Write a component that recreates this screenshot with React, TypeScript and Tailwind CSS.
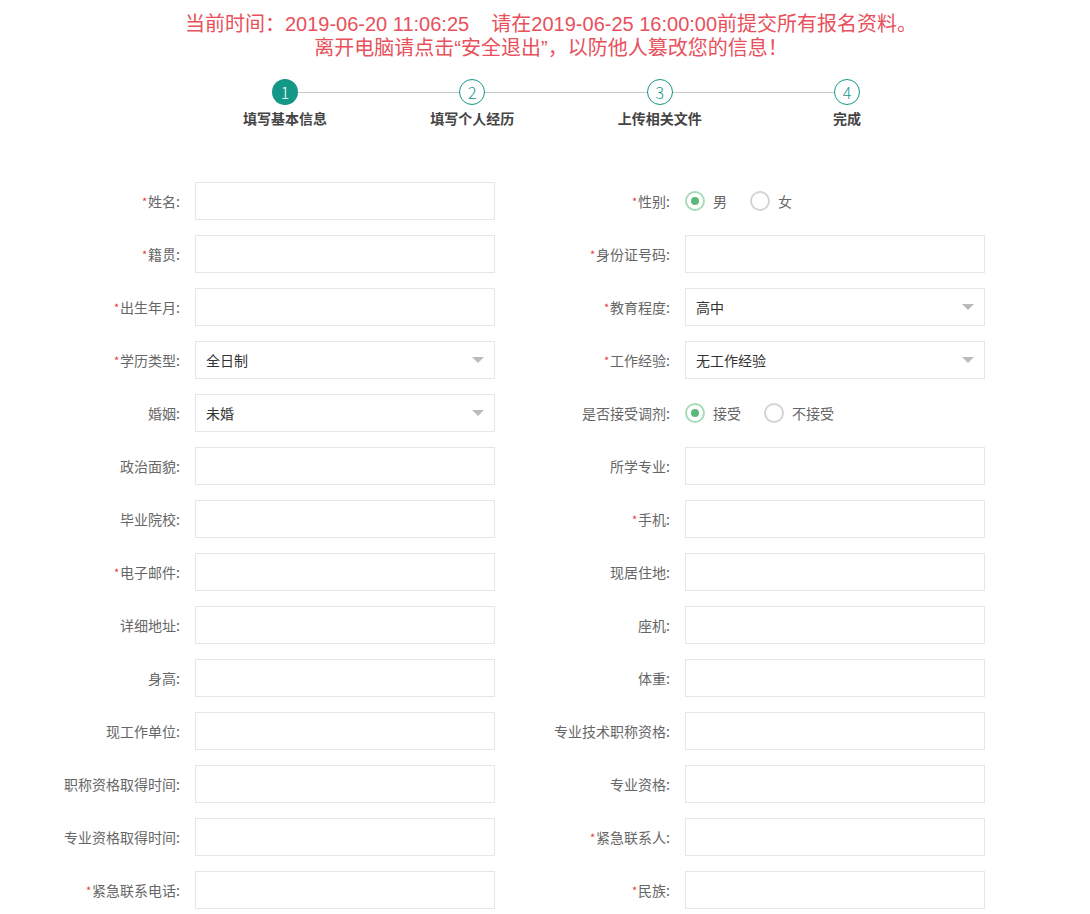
import React from "react";

type Field =
  | { kind: "input"; label: string; req?: boolean }
  | { kind: "select"; label: string; req?: boolean; value: string }
  | { kind: "radio"; label: string; req?: boolean; options: string[] };

const rows: [Field, Field][] = [
  [
    { kind: "input", label: "姓名", req: true },
    { kind: "radio", label: "性别", req: true, options: ["男", "女"] },
  ],
  [
    { kind: "input", label: "籍贯", req: true },
    { kind: "input", label: "身份证号码", req: true },
  ],
  [
    { kind: "input", label: "出生年月", req: true },
    { kind: "select", label: "教育程度", req: true, value: "高中" },
  ],
  [
    { kind: "select", label: "学历类型", req: true, value: "全日制" },
    { kind: "select", label: "工作经验", req: true, value: "无工作经验" },
  ],
  [
    { kind: "select", label: "婚姻", value: "未婚" },
    { kind: "radio", label: "是否接受调剂", options: ["接受", "不接受"] },
  ],
  [
    { kind: "input", label: "政治面貌" },
    { kind: "input", label: "所学专业" },
  ],
  [
    { kind: "input", label: "毕业院校" },
    { kind: "input", label: "手机", req: true },
  ],
  [
    { kind: "input", label: "电子邮件", req: true },
    { kind: "input", label: "现居住地" },
  ],
  [
    { kind: "input", label: "详细地址" },
    { kind: "input", label: "座机" },
  ],
  [
    { kind: "input", label: "身高" },
    { kind: "input", label: "体重" },
  ],
  [
    { kind: "input", label: "现工作单位" },
    { kind: "input", label: "专业技术职称资格" },
  ],
  [
    { kind: "input", label: "职称资格取得时间" },
    { kind: "input", label: "专业资格" },
  ],
  [
    { kind: "input", label: "专业资格取得时间" },
    { kind: "input", label: "紧急联系人", req: true },
  ],
  [
    { kind: "input", label: "紧急联系电话", req: true },
    { kind: "input", label: "民族", req: true },
  ],
];

const steps = ["填写基本信息", "填写个人经历", "上传相关文件", "完成"];

function Label({ text, req }: { text: string; req?: boolean }) {
  return (
    <div className="h-[38px] flex items-center justify-end text-[14px] text-[#666] whitespace-nowrap">
      {req && <span className="text-[#e4393c] text-[11px] mr-px">*</span>}
      {text}:
    </div>
  );
}

function Control({ f }: { f: Field }) {
  if (f.kind === "radio") {
    return (
      <div className="h-[38px] flex items-center">
        {f.options.map((o, i) => (
          <label key={o} className="flex items-center mr-[23px] text-[14px] text-[#666]">
            {/* radio circle, first option checked */}
            <span
              className={
                "w-[20px] h-[20px] rounded-full border-2 flex items-center justify-center mr-[8px] " +
                (i === 0 ? "border-[#a8dcb8]" : "border-[#d4d4d4]")
              }
            >
              {i === 0 && <span className="w-[8px] h-[8px] rounded-full bg-[#5cb87a]" />}
            </span>
            {o}
          </label>
        ))}
      </div>
    );
  }
  if (f.kind === "select") {
    return (
      <div className="h-[38px] w-[300px] border border-[#e6e6e6] flex items-center justify-between pl-[10px] pr-[10px] text-[14px] text-[#333]">
        <span>{f.value}</span>
        <span className="w-0 h-0 border-l-[6px] border-r-[6px] border-t-[6px] border-l-transparent border-r-transparent border-t-[#bbb]" />
      </div>
    );
  }
  return <input className="h-[38px] w-[300px] border border-[#e6e6e6] outline-none px-[10px] text-[14px]" />;
}

export default function App() {
  return (
    <div
      className="bg-white w-[1090px] min-h-[914px] pb-[6px]"
      style={{ fontFamily: '"Noto Sans CJK SC", "Liberation Sans", sans-serif' }}
    >
      <div
        className="pt-[12px] pl-[12px] text-center text-[#e8505b] text-[20px] leading-[24px]"
        style={{ fontFamily: '"Liberation Sans", "Noto Sans CJK SC", sans-serif' }}
      >
        <p>当前时间：2019-06-20 11:06:25&nbsp;&nbsp;&nbsp;&nbsp;请在2019-06-25 16:00:00前提交所有报名资料。</p>
        <p>离开电脑请点击“安全退出”，以防他人篡改您的信息！</p>
      </div>

      {/* step bar */}
      <div className="relative ml-[235px] w-[662px] mt-[19px] flex justify-between">
        <span className="absolute left-[50px] right-[50px] top-[13px] h-px bg-[#c8c8c8]" />
        {steps.map((s, i) => (
          <div key={s} className="relative w-[100px] flex flex-col items-center">
            <span
              className={
                "w-[26px] h-[26px] rounded-full flex items-center justify-center text-[16px] font-light " +
                (i === 0
                  ? "bg-[#139787] text-white"
                  : "bg-white border border-[#139787] text-[#139787]")
              }
            >
              {i + 1}
            </span>
            <span className="mt-[4px] text-[14px] font-bold text-[#444] leading-[19px]">{s}</span>
          </div>
        ))}
      </div>

      <div className="mt-[54px] grid grid-cols-[180px_300px_160px_300px] gap-x-[15px] gap-y-[15px]">
        {rows.map(([a, b], i) => (
          <React.Fragment key={i}>
            <Label text={a.label} req={a.req} />
            <Control f={a} />
            <Label text={b.label} req={b.req} />
            <Control f={b} />
          </React.Fragment>
        ))}
      </div>
    </div>
  );
}
